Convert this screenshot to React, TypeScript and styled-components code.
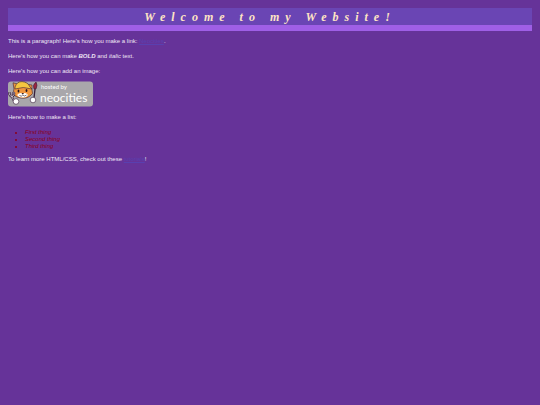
import React from "react";
import styled, { createGlobalStyle } from "styled-components";

const GlobalStyle = createGlobalStyle`
  body {
    margin: 8px;
    background: #663399;
    color: #eee6f5;
    font-family: "Liberation Sans", Arial, sans-serif;
    font-size: 6px;
    line-height: 7px;
  }
`;

const Title = styled.h1`
  margin: 0 0 7px;
  padding: 2px 0 0;
  background: #6a45b4;
  border-bottom: 6px solid #9f5fe6;
  color: #ffe4c4;
  font-family: "Liberation Serif", "Times New Roman", serif;
  font-size: 12px;
  font-style: italic;
  font-weight: bold;
  line-height: 15px;
  letter-spacing: 6px;
  text-align: center;
`;

const Paragraph = styled.p`
  margin: 0 0 8px;
`;

const Caption = styled(Paragraph)`
  margin-bottom: 6px;
`;

const Link = styled.a`
  color: #5940b0;
  text-decoration: underline;
`;

const BadgeLink = styled.a`
  display: block;
  width: fit-content;
  margin-bottom: 7px;
`;

const Badge = styled.svg`
  display: block;
  width: 85px;
  height: 26px;
`;

const List = styled.ul`
  margin: 0 0 6px;
  padding-left: 17px;
  color: #8c0018;
  font-style: italic;
`;

const things = ["First thing", "Second thing", "Third thing"];

function NeocitiesBadge() {
  return (
    <Badge viewBox="0 0 85 26" role="img" aria-label="Hosted by Neocities">
      <rect x="0" y="0.5" width="85" height="25" rx="3" fill="#a9a7ab" />
      <g fontFamily="Lato, sans-serif" fill="#fff">
        <text x="33" y="8" fontSize="6">hosted by</text>
        <text x="32" y="21" fontSize="12">neocities</text>
      </g>
      <g stroke="#38203a" strokeWidth="0.6" strokeLinejoin="round">
        <path d="M6 8L5 1.8L10 3Q15 0 20 3.4L24 4L24 9Q26 13 22 15Q17 19 9 16Q4 14 6 8Z" fill="#ef963d" />
        <path d="M7 6Q9 .4 14 .6Q20 1 22 6L24 8Q15 5 7 8Z" fill="#f4c640" />
        <path d="M9 14Q12 11 14.8 12.5Q18 11 20 14Q18 17 15 16.5Q11 17 9 14Z" fill="#fff" stroke="none" />
        <path d="M27 8L26 17" fill="none" strokeWidth="1.3" />
        <path d="M26 8Q24 4 28 1Q30 4 28 8Z" fill="#9d2540" />
        <path d="M1 11Q1 15 4 16L7 22M6 11Q7 14 4 16M3.5 11L4 16" fill="none" strokeWidth="2" />
        <path d="M1 11Q1 15 4 16L7 22M6 11Q7 14 4 16M3.5 11L4 16" fill="none" stroke="#e8e7ef" strokeWidth="0.7" />
        <circle cx="8" cy="20.5" r="2.8" fill="#fff" />
        <circle cx="25" cy="19" r="2.8" fill="#fff" />
      </g>
      <g fill="#241520">
        <ellipse cx="10.5" cy="10" rx="0.9" ry="1.5" />
        <ellipse cx="18.5" cy="9.5" rx="0.9" ry="1.5" />
        <path d="M13.5 12H16L14.8 13.5Z" />
      </g>
      <path d="M11.5 14.5Q13.5 16 14.8 14Q16.5 16 18.5 14" fill="none" stroke="#241520" strokeWidth="0.6" />
    </Badge>
  );
}

export default function App() {
  return (
    <>
      <GlobalStyle />
      <main>
        <Title>Welcome to my Website!</Title>
        <Paragraph>
          This is a paragraph! Here's how you make a link:{" "}
          <Link href="#neocities">Neocities</Link>.
        </Paragraph>
        <Paragraph>
          Here's how you can make <strong><em>BOLD</em></strong> and <em>italic</em> text.
        </Paragraph>
        <Caption>Here's how you can add an image:</Caption>
        <BadgeLink href="#neocities">
          <NeocitiesBadge />
        </BadgeLink>
        <Paragraph>Here's how to make a list:</Paragraph>
        <List>
          {things.map((thing) => (
            <li key={thing}>{thing}</li>
          ))}
        </List>
        <Paragraph>
          To learn more HTML/CSS, check out these{" "}
          <Link href="#tutorials">tutorials</Link>!
        </Paragraph>
      </main>
    </>
  );
}
